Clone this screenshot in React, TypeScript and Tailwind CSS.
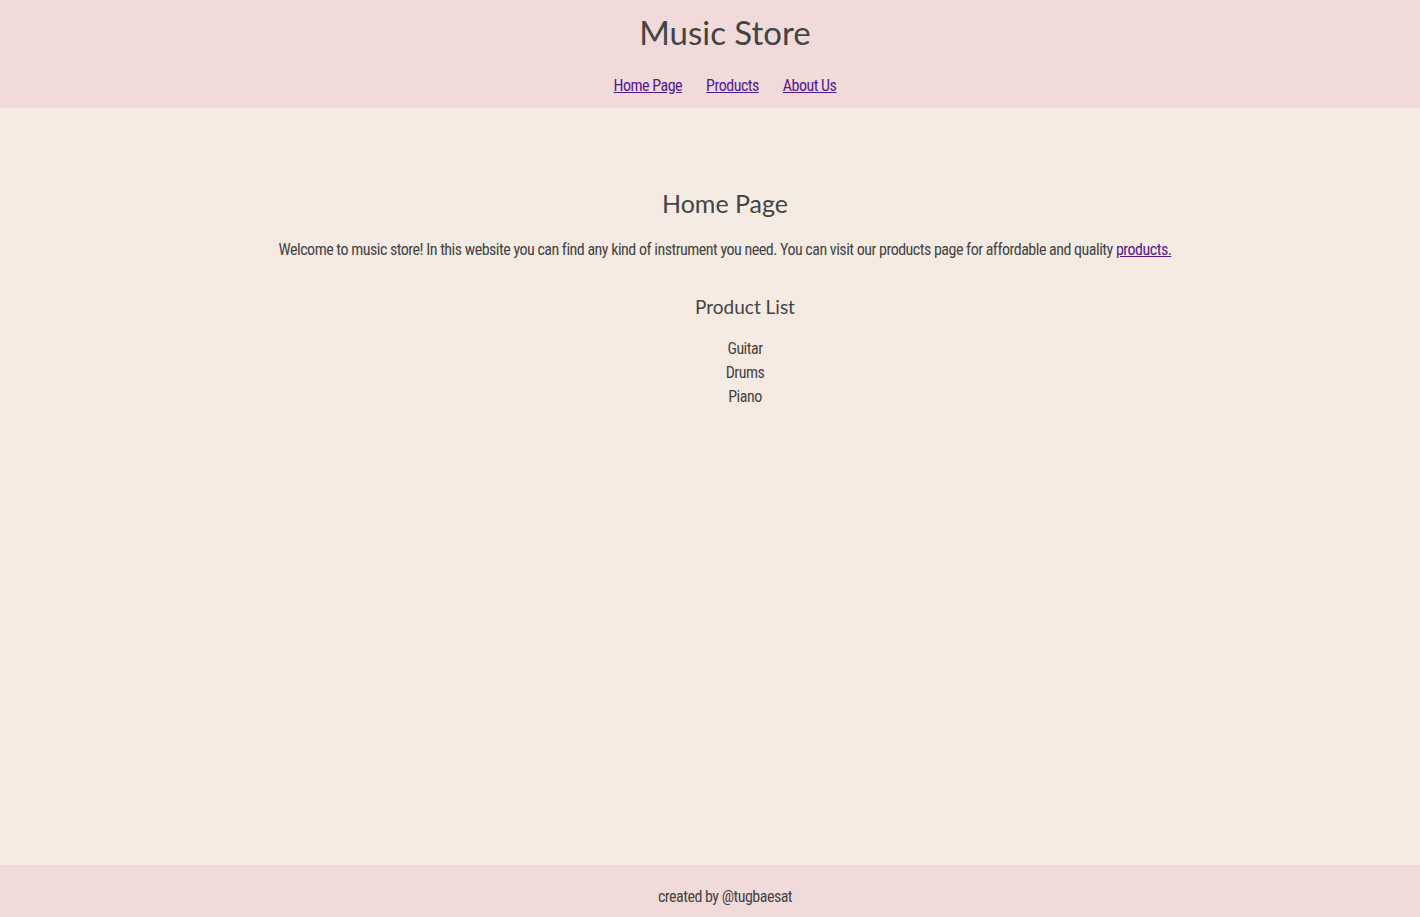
const body = { fontFamily: '"Roboto Condensed", "DejaVu Sans Condensed", sans-serif' }
const head = { fontFamily: 'Lato, "Open Sans", sans-serif' }

export default function App() {
  return (
    <div className="min-h-[917px] flex flex-col bg-[#f5ebe2] text-[#444]" style={body}>
      {/* Header */}
      <header className="bg-[#f0dada] h-[108px] flex flex-col items-center pl-[30px]">
        <h1 className="text-[33px] leading-none mt-[16px] text-[#444]" style={head}>Music Store</h1>
        <nav className="flex gap-6 mt-[25px] text-[16px] tracking-[-0.5px]">
          <a href="#" className="underline text-[#551a8b]">Home Page</a>
          <a href="#" className="underline text-[#551a8b]">Products</a>
          <a href="#" className="underline text-[#551a8b]">About Us</a>
        </nav>
      </header>

      {/* Content */}
      <main className="flex-1 flex flex-col items-center pl-[30px] pt-[80px] text-[16px] tracking-[-0.5px]">
        <h2 className="text-[25px] leading-[30px] tracking-normal" style={head}>Home Page</h2>
        <p className="mt-[20px] leading-[24px]">
          Welcome to music store! In this website you can find any kind of instrument you need. You can visit our products page for affordable and quality{' '}
          <a href="#" className="underline text-[#551a8b]">products.</a>
        </p>
        <div className="flex flex-col items-center pl-[40px]">
          <h3 className="mt-[33px] text-[19px] leading-[24px] tracking-normal" style={head}>Product List</h3>
          <ul className="mt-[18px] text-center leading-[24px]">
            <li>Guitar</li>
            <li>Drums</li>
            <li>Piano</li>
          </ul>
        </div>
      </main>

      {/* Footer */}
      <footer className="bg-[#f0dada] h-[52px] flex items-center justify-center pl-[30px] pt-[12px] text-[16px] tracking-[-0.5px]">
        created by @tugbaesat
      </footer>
    </div>
  )
}
